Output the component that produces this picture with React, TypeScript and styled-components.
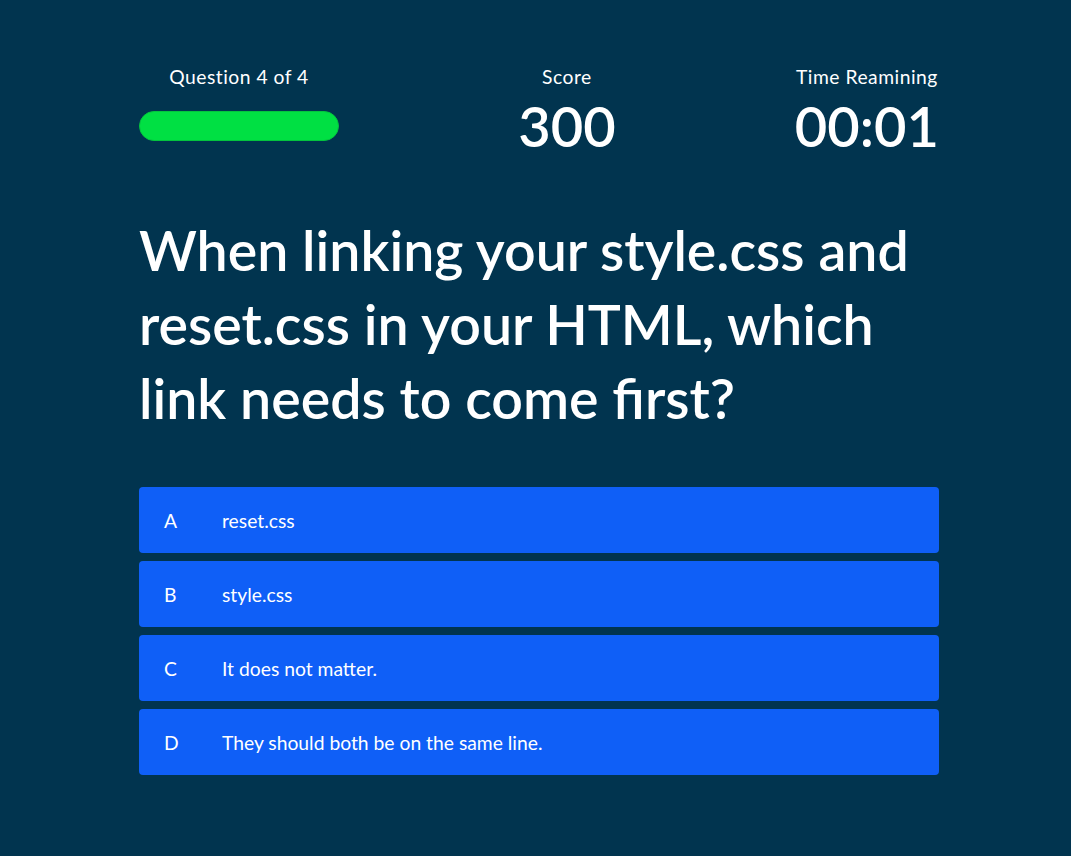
import * as React from 'react';
import styled, { createGlobalStyle } from 'styled-components';

const GlobalStyle = createGlobalStyle`
  html, body {
    margin: 0;
    padding: 0;
    background: #01344f;
    color: #ffffff;
    font-family: 'Lato', 'Noto Sans', sans-serif;
  }
`;

const Page = styled.main`
  width: 800px;
  margin: 0 0 0 139px;
  padding-top: 64px;
  padding-bottom: 82px;
`;

const Hud = styled.header`
  display: flex;
  justify-content: space-between;
  align-items: flex-start;
`;

const HudItem = styled.div<{ $width?: number }>`
  display: flex;
  flex-direction: column;
  align-items: center;
  width: ${(p) => (p.$width ? `${p.$width}px` : 'auto')};
`;

const HudLabel = styled.p`
  margin: 0;
  font-size: 19.3px;
  letter-spacing: 0.5px;
  line-height: 26px;
`;

const HudValue = styled.h2`
  margin: 6px 0 0;
  font-size: 56px;
  font-weight: 600;
  line-height: 60px;
`;

const ProgressTrack = styled.div`
  margin-top: 21px;
  width: 200px;
  height: 30px;
  box-sizing: border-box;
  border-radius: 15px;
  border: 1px solid #04c43e;
  background: #00e043;
`;

const Question = styled.h1`
  margin: 57px 0 0;
  font-size: 55.5px;
  font-weight: 600;
  line-height: 74px;
`;

const Choices = styled.ul`
  list-style: none;
  margin: 52px 0 0;
  padding: 0;
  display: flex;
  flex-direction: column;
  gap: 8px;
`;

const Choice = styled.li`
  display: flex;
  align-items: center;
  height: 66px;
  padding: 0 25px;
  border-radius: 4px;
  background: #0f5ff7;
  font-size: 19.3px;
  cursor: pointer;
`;

const ChoiceKey = styled.span`
  width: 58px;
  flex-shrink: 0;
`;

const choices = [
  ['A', 'reset.css'],
  ['B', 'style.css'],
  ['C', 'It does not matter.'],
  ['D', 'They should both be on the same line.'],
];

export default function App() {
  return (
    <>
      <GlobalStyle />
      <Page>
        <Hud>
          <HudItem $width={200}>
            <HudLabel>Question 4 of 4</HudLabel>
            <ProgressTrack />
          </HudItem>
          <HudItem>
            <HudLabel>Score</HudLabel>
            <HudValue>300</HudValue>
          </HudItem>
          <HudItem>
            <HudLabel>Time Reamining</HudLabel>
            <HudValue>00:01</HudValue>
          </HudItem>
        </Hud>
        <Question>
          When linking your style.css and reset.css in your HTML, which link
          needs to come first?
        </Question>
        <Choices>
          {choices.map(([key, text]) => (
            <Choice key={key}>
              <ChoiceKey>{key}</ChoiceKey>
              {text}
            </Choice>
          ))}
        </Choices>
      </Page>
    </>
  );
}
